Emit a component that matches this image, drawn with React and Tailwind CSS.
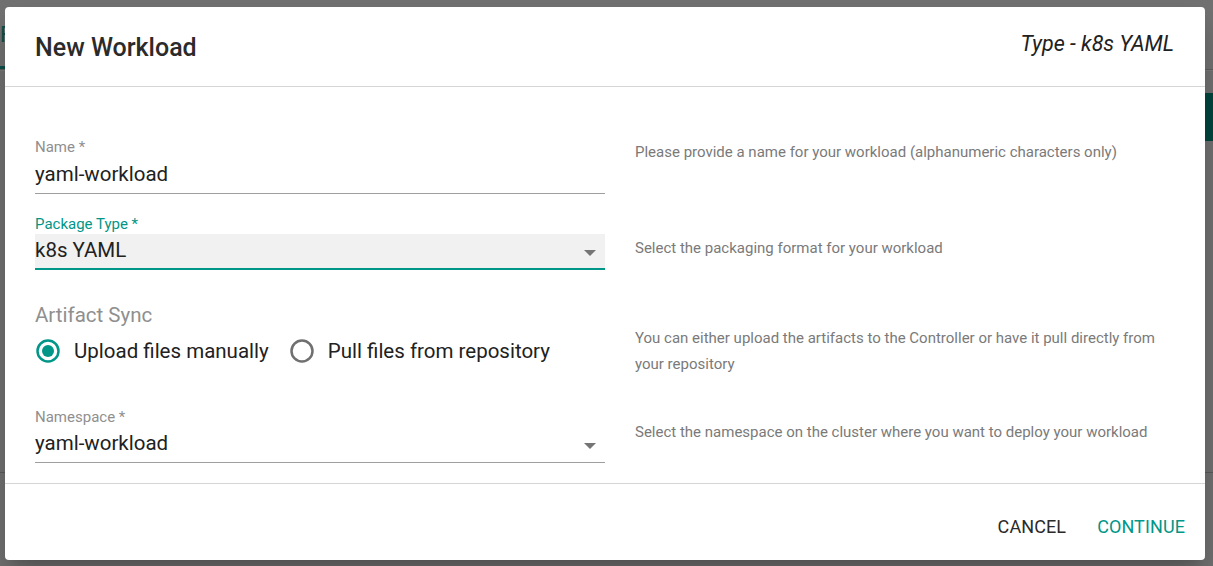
import React from "react";

const font = { fontFamily: "Roboto, 'Noto Sans', sans-serif" };

function Arrow() {
  return (
    <svg width="12" height="6" viewBox="0 0 12 6" className="mr-[9px] mt-[4px]">
      <path d="M0 0 L12 0 L6 6 Z" fill="#757575" />
    </svg>
  );
}

function Radio({ checked }) {
  return checked ? (
    <svg width="26" height="26" viewBox="0 0 26 26">
      <circle cx="13" cy="13" r="10.5" fill="none" stroke="#009688" strokeWidth="2.5" />
      <circle cx="13" cy="13" r="6" fill="#009688" />
    </svg>
  ) : (
    <svg width="26" height="26" viewBox="0 0 26 26">
      <circle cx="13" cy="13" r="10.5" fill="none" stroke="#707070" strokeWidth="2.5" />
    </svg>
  );
}

export default function App() {
  return (
    <div className="relative h-[566px] w-[1213px] overflow-hidden bg-[#717171]" style={font}>
      {/* underlying page, dimmed */}
      <div className="flex h-[70px] items-end border-b border-[#5e5e5e]">
        <div className="flex h-[70px] w-[5px] flex-col justify-between overflow-hidden">
          <span className="mt-[24px] text-[22px] leading-[24px] text-[#0b4f47]">F</span>
          <div className="h-[3px] w-full bg-[#0b5149]" />
        </div>
      </div>
      <div className="flex h-[70px] items-start justify-end border-t border-[#7a7a7a]">
        <div className="mt-[22px] h-[48px] w-[40px] bg-[#00463e]" />
      </div>
      <div className="h-[332px]" />
      <div className="h-px bg-[#5a5a5a]" />

      {/* dialog */}
      <div className="absolute left-[5px] top-[7px] flex h-[553px] w-[1200px] flex-col rounded-[4px] bg-white shadow-[0_11px_15px_-7px_rgba(0,0,0,0.2),0_24px_38px_3px_rgba(0,0,0,0.14)]">
        <div className="flex h-[80px] shrink-0 items-center justify-between border-b border-[#d5d5d5] pl-[30px] pr-[31px]">
          <span className="pt-[3px] text-[25px] font-medium leading-[28px] text-[#2b2b2b]">New Workload</span>
          <span className="mb-[6px] text-[21.5px] italic leading-[24px] text-[#212121]">Type - k8s YAML</span>
        </div>

        <div className="flex flex-1 flex-col pl-[30px] pt-[52px]">
          {/* Name */}
          <div className="flex">
            <div className="flex w-[570px] flex-col">
              <span className="text-[15px] leading-[16px] text-[#8f8f8f]">Name *</span>
              <div className="flex h-[39px] items-center border-b border-[#9e9e9e] pt-[1px] text-[20.5px] text-[#212121]">
                yaml-workload
              </div>
            </div>
            <div className="ml-[30px] pt-[3px] text-[15px] leading-[20px] text-[#7a7a7a]">
              Please provide a name for your workload (alphanumeric characters only)
            </div>
          </div>

          {/* Package type */}
          <div className="mt-[22px] flex">
            <div className="flex w-[570px] flex-col">
              <span className="text-[15px] leading-[16px] text-[#009688]">Package Type *</span>
              <div className="mt-[2px] flex h-[36px] items-center justify-between border-b-2 border-[#009688] bg-[#f1f1f1] text-[20.5px] text-[#212121]">
                <span className="pb-[2px]">k8s YAML</span>
                <Arrow />
              </div>
            </div>
            <div className="ml-[30px] pt-[22px] text-[15px] leading-[20px] text-[#7a7a7a]">
              Select the packaging format for your workload
            </div>
          </div>

          {/* Artifact sync */}
          <div className="mt-[33px] flex">
            <div className="flex w-[570px] flex-col">
              <span className="text-[20.5px] leading-[24px] text-[#8f8f8f]">Artifact Sync</span>
              <div className="mt-[11px] flex h-[26px] items-center text-[20.5px] text-[#212121]">
                <Radio checked />
                <span className="ml-[13px]">Upload files manually</span>
                <span className="ml-[20px]"><Radio /></span>
                <span className="ml-[13px]">Pull files from repository</span>
              </div>
            </div>
            <div className="ml-[30px] w-[540px] pt-[22px] text-[15px] leading-[26px] text-[#7a7a7a]">
              You can either upload the artifacts to the Controller or have it pull directly from your repository
            </div>
          </div>

          {/* Namespace */}
          <div className="mt-[32px] flex">
            <div className="flex w-[570px] flex-col">
              <span className="text-[15px] leading-[16px] text-[#8f8f8f]">Namespace *</span>
              <div className="flex h-[38px] items-center justify-between border-b border-[#9e9e9e] text-[20.5px] text-[#212121]">
                <span>yaml-workload</span>
                <Arrow />
              </div>
            </div>
            <div className="ml-[30px] pt-[13px] text-[15px] leading-[20px] text-[#7a7a7a]">
              Select the namespace on the cluster where you want to deploy your workload
            </div>
          </div>
        </div>

        <div className="flex h-[77px] shrink-0 items-center justify-end gap-[31px] border-t border-[#d5d5d5] pr-[20px] pt-[9px]">
          <span className="text-[18px] uppercase tracking-[0.1px] text-[#2a2a2a]">Cancel</span>
          <span className="text-[18px] uppercase tracking-[0.1px] text-[#009688]">Continue</span>
        </div>
      </div>
    </div>
  );
}
